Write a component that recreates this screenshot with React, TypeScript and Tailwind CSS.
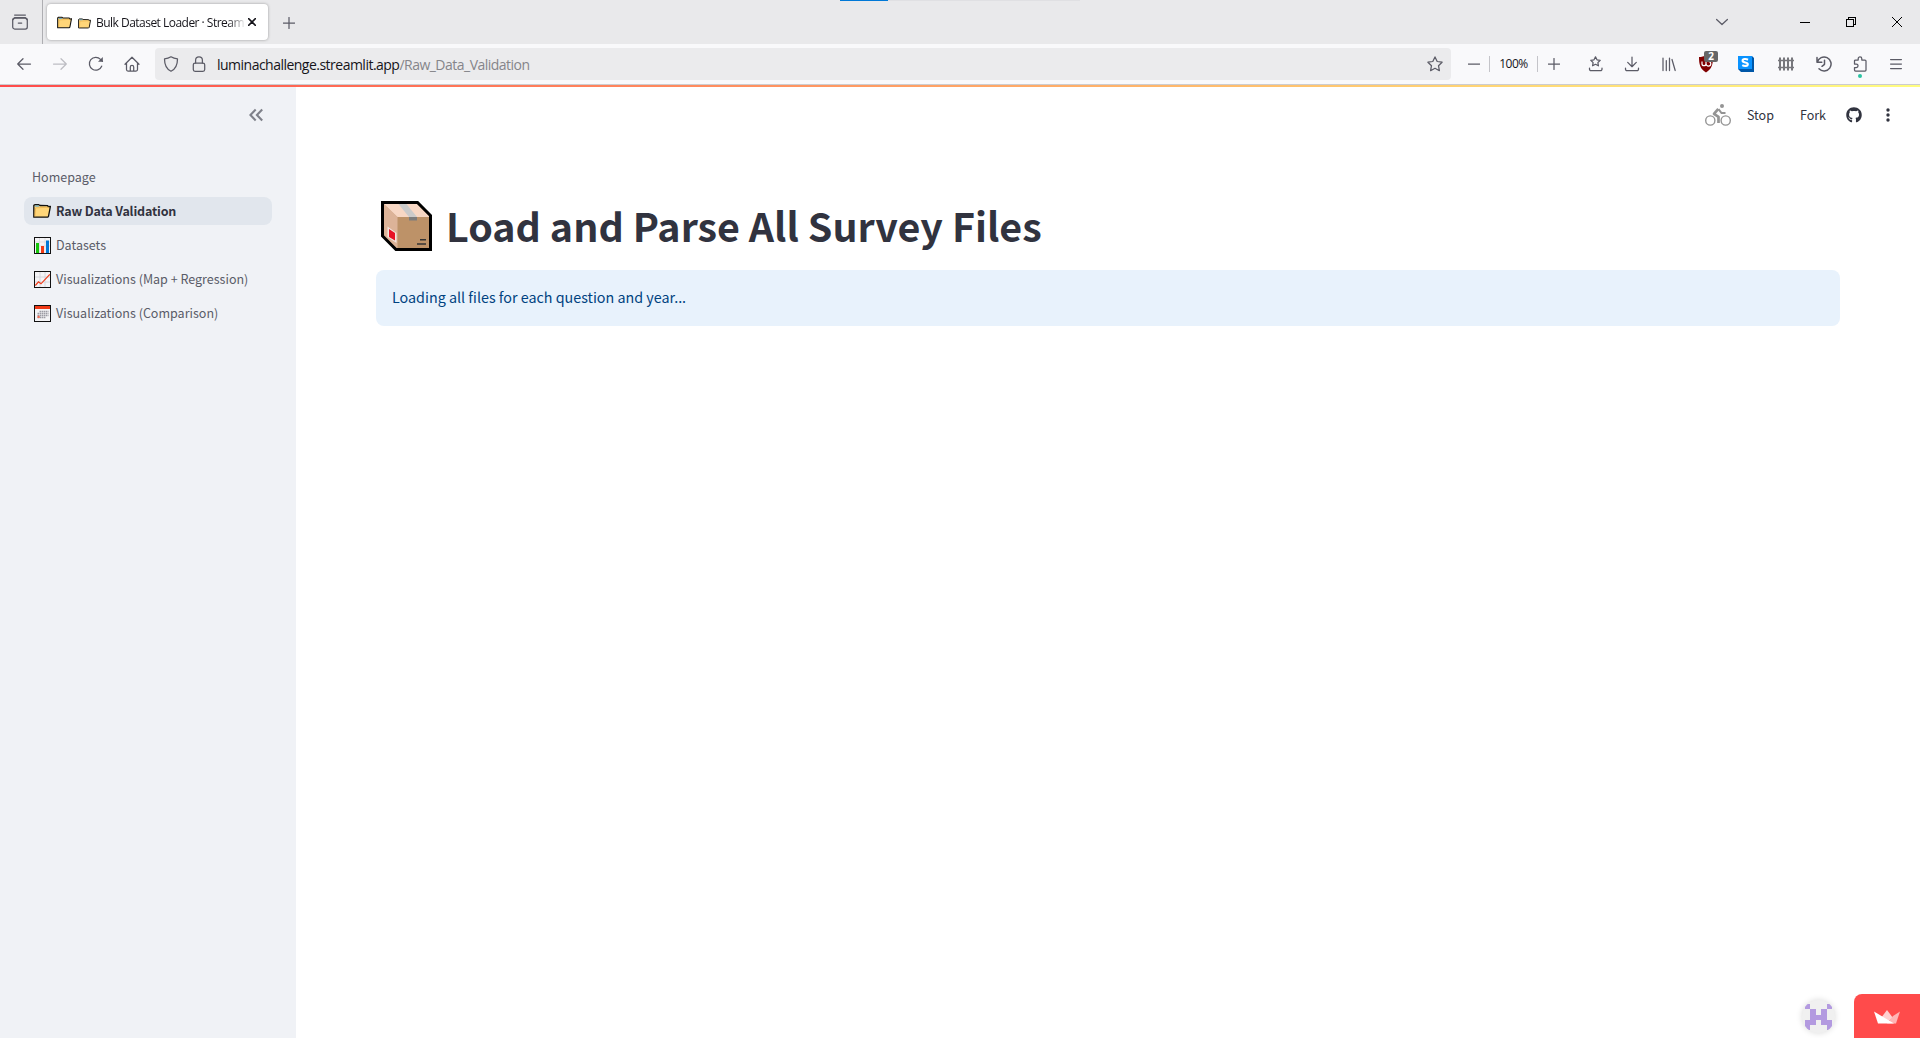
import React from "react";
import { FaGithub } from "react-icons/fa";

const SOURCE = "font-['Noto_Sans_CJK_SC',sans-serif]";
const SYSTEM = "font-['Open_Sans','Noto_Sans',sans-serif]";

type IconProps = {
  size?: number;
  box?: string;
  className?: string;
  children: React.ReactNode;
};

function Icon({ size = 16, box = "0 0 16 16", className = "", children }: IconProps) {
  return (
    <svg
      width={size}
      height={size}
      viewBox={box}
      fill="none"
      stroke="currentColor"
      strokeWidth="1.25"
      strokeLinecap="round"
      strokeLinejoin="round"
      className={`block shrink-0 ${className}`}
    >
      {children}
    </svg>
  );
}

function Cell({ width, children, className = "" }: { width: string; children: React.ReactNode; className?: string }) {
  return <div className={`flex h-full shrink-0 items-center justify-center ${width} ${className}`}>{children}</div>;
}

function Folder({ width, height }: { width: number; height: number }) {
  return (
    <svg width={width} height={height} viewBox="0 0 18 14" className="block shrink-0">
      <path d="M.8 13.200V1.400L1.800.7h4l1.200.8 7.800.2.300 1 2.300-.3-1.900 10-.8.800z" fill="#ffd679" stroke="#111" strokeWidth="1.3" strokeLinejoin="round" />
      <path d="M2 1.600h3.600l.8.900H2z" fill="#3a9be0" />
      <path d="M1.900 12.500 2.600 3.900l13-.7" fill="none" stroke="#e9ae45" strokeWidth=".7" />
    </svg>
  );
}

function BarChart() {
  return (
    <svg width="17" height="17" viewBox="0 0 17 17" className="block">
      <rect x=".5" y=".5" width="16" height="16" fill="#f4f4f6" stroke="#111" />
      <path d="M1 5h15M1 9h15M5.500 1v15M11 1v15" stroke="#d6d6dc" strokeWidth=".7" />
      <path d="M2 6h3v10H2z" fill="#16c60c" />
      <path d="M7 9h3v7H7z" fill="#f03a17" />
      <path d="M12 3.500h3V16h-3z" fill="#0078d7" />
    </svg>
  );
}

function LineChart() {
  return (
    <svg width="17" height="17" viewBox="0 0 17 17" className="block">
      <rect x=".5" y=".5" width="16" height="16" fill="#f4f4f6" stroke="#111" />
      <path d="M1 6h15M1 11h15M6 1v15M11 1v15" stroke="#d0d0d8" strokeWidth=".8" />
      <path d="M1.300 14.500 4.500 10.800 7 12.800 15.800 3.300" fill="none" stroke="#f03a17" strokeWidth="1.2" />
    </svg>
  );
}

function Calendar() {
  return (
    <svg width="17" height="17" viewBox="0 0 17 17" className="block">
      <rect x=".5" y=".5" width="16" height="16" fill="#f4f4f6" stroke="#111" />
      <path d="M1 1h15v3H1z" fill="#f03a17" />
      <path d="M5.500 6.500h9M3.500 8.500h11M3.500 10.500h11M3.500 12.500h8" stroke="#9c9ca4" strokeWidth="1.400" strokeDasharray="1.600 .5" />
      <path d="M3.500 10.800h2.200v2.200H3.500z" fill="#f0705a" />
    </svg>
  );
}

function Package() {
  return (
    <svg width="51" height="50" viewBox="0 0 51 50" className="block shrink-0">
      <path d="M1.500 1.500H36L49.500 15V48.500H15L1.500 34.500z" fill="#bd9268" />
      <path d="M2.500 2.500 16.500 16V48L2.500 34z" fill="#dcb398" />
      <path d="M2.500 2.500H36L49 16H16.500z" fill="#f7d7c4" />
      <path d="M17 2.500h8L36 16h-8z" fill="#cacaca" />
      <path d="M28 16h8v3.500h-8z" fill="#7c7c7c" />
      <path d="M6.500 25.500 15.500 32v10L6.500 36z" fill="#f3e6de" />
      <path d="M8 28 14 32v7.500L8 36z" fill="#e81224" />
      <path d="M39 38.700h6M36 43h9" stroke="#333" strokeWidth="1.500" />
      <path d="M1.500 1.500H36.500L49.500 14.500V48.500H15L1.500 35z" fill="none" stroke="#000" strokeWidth="3" />
    </svg>
  );
}

function TabStrip() {
  return (
    <div className="flex h-11 shrink-0 items-center bg-[#e9e9eb] text-[#5b5b66]">
      <div className="flex h-full w-[43px] items-center justify-center border-r border-[#aeaeb2] pr-[3px]">
        <Icon>
          <path d="M2.600 1h10.800" />
          <rect x=".7" y="4" width="14.600" height="11" rx="2" />
          <path d="M1 5.500 3 3.500h10l2 2M6.300 9h3.400" />
        </Icon>
      </div>
      <div className="ml-1 flex h-9 w-[221px] items-center rounded bg-white pl-[10px] shadow-[0_0_3px_rgba(0,0,0,0.35)]">
        <Folder width={15} height={13} />
        <div className="ml-1.5 flex w-[168px] shrink-0 items-center overflow-hidden pt-0.5">
          <Folder width={13} height={11} />
          <span className={`${SYSTEM} ml-[5px] bg-[linear-gradient(90deg,#15141a_132px,transparent_150px)] bg-clip-text text-[12px] leading-5 tracking-[-0.520px] whitespace-nowrap text-transparent`}>
            Bulk Dataset Loader · Stream
          </span>
        </div>
        <Icon size={8} box="0 0 8 8" className="ml-0.5 text-[#15141a]">
          <path d="m.6.6 6.800 6.800M7.400.6.6 7.400" strokeWidth="1.500" />
        </Icon>
      </div>
      <Icon size={12} box="0 0 12 12" className="mt-0.5 ml-[15px]">
        <path d="M6 .5v11M.5 6h11" />
      </Icon>
      <div className="h-full w-[545px]" />
      <div className="h-px w-12 self-start bg-[#0078d7]" />
      <div className="h-px w-48 self-start bg-[#e0e0e3]" />
      <div className="flex-1" />
      <Icon size={12} box="0 0 12 12" className="mr-[72px]">
        <path d="m.6 3.500 5.400 5 5.400-5" />
      </Icon>
      <div className="mr-9 h-px w-[10px] bg-black" />
      <svg width="10" height="10" viewBox="0 0 10 10" fill="none" stroke="#000" className="mr-9 block" shapeRendering="crispEdges">
        <path d="M.5 2.500h7v7h-7zM2.500 2.500v-2h7v7h-2" />
      </svg>
      <svg width="10" height="10" viewBox="0 0 10 10" stroke="#000" className="mr-[18px] block">
        <path d="m0 0 10 10M10 0 0 10" />
      </svg>
    </div>
  );
}

const STAR = "m8 .9 2.200 4.600 4.900.7-3.600 3.500.9 5L8 12.300l-4.400 2.400.9-5L.9 6.200l4.900-.7z";

function Toolbar() {
  return (
    <div className="flex h-10 shrink-0 items-center bg-[#f9f9fb] pl-1.5 text-[#5b5b66]">
      <Cell width="w-9"><Icon><path d="M14.500 8H1.700M7 2.700 1.700 8 7 13.300" /></Icon></Cell>
      <Cell width="w-9" className="text-[#bdbdc3]"><Icon><path d="M1.500 8h12.800M9 2.700 14.300 8 9 13.300" /></Icon></Cell>
      <Cell width="w-9">
        <Icon><path d="M13.700 10.200A6.400 6.400 0 1 1 12.500 3.400l2 2" /><path d="M14.800 1v4.800H10z" fill="currentColor" stroke="none" /></Icon>
      </Cell>
      <Cell width="w-[34px]" className="pl-px">
        <Icon><path d="M1 8.300 8 1.200l7 7.100M2.500 7v6.500a1.500 1.500 0 0 0 1.500 1.500h8a1.500 1.500 0 0 0 1.500-1.500V7M6.300 15v-4a1.700 1.700 0 0 1 3.400 0v4" /></Icon>
      </Cell>
      <div className="ml-[7px] flex h-8 w-[1296px] items-center rounded bg-[#ebebed] px-2">
        <Icon><path d="M8 .8c2 1.300 4 1.900 6.500 2.100 0 6-1.800 10-6.500 12.300C3.300 12.900 1.500 8.900 1.500 2.900 4 2.700 6 2.100 8 .8z" /></Icon>
        <Icon className="ml-3"><rect x="2.300" y="7" width="11.400" height="8.300" rx="1.800" /><path d="M4.600 7V4.200a3.400 3.400 0 0 1 6.800 0V7" /></Icon>
        <span className={`${SYSTEM} mt-0.5 ml-[10px] text-[14px] leading-8 tracking-[-0.515px] whitespace-nowrap text-[#15141a]`}>
          luminachallenge.streamlit.app<span className="text-[#85858a]">/Raw_Data_Validation</span>
        </span>
        <Icon className="ml-auto"><path d={STAR} /></Icon>
      </div>
      <Cell width="w-[39px]" className="ml-[3px]"><Icon size={12} box="0 0 12 12"><path d="M.5 6h11" /></Icon></Cell>
      <div className="-ml-1 flex h-4 w-[49px] items-center justify-center border-x border-[#c4c4c9]">
        <span className={`${SYSTEM} text-[12px] tracking-[-0.500px] text-[#15141a]`}>100%</span>
      </div>
      <Cell width="w-[29px]" className="pl-0.5"><Icon size={12} box="0 0 12 12"><path d="M6 .5v11M.5 6h11" /></Icon></Cell>
      <Cell width="w-9" className="ml-[11px]">
        <Icon><path d="m7.500.9 1.500 2.900 3.200.5-2.300 2.300.5 3.200-2.900-1.500-2.900 1.500.5-3.200-2.300-2.300L6 3.800zM1.500 12v1.200A1.500 1.500 0 0 0 3 14.700h9.500a1.500 1.500 0 0 0 1.500-1.500V12" /></Icon>
      </Cell>
      <Cell width="w-9">
        <Icon><path d="M8 1v9.500M3.700 6.400 8 10.700l4.300-4.300M1.500 12v1.200A1.500 1.500 0 0 0 3 14.700h10a1.500 1.500 0 0 0 1.500-1.500V12" /></Icon>
      </Cell>
      <Cell width="w-[37px]"><Icon><path d="M2 2v12.500M5.300 4.500v10M8.500 2v12.500M11 3.500l3.200 11" /></Icon></Cell>
      <Cell width="w-[38px]" className="relative">
        <svg width="16" height="18" viewBox="0 0 16 18" className="block">
          <path d="M8 0c2 1.500 4.500 2 7 2 0 7-1 12-7 15.500C2 14 1 9 1 2c2.500 0 5-.5 7-2z" fill="#800000" />
          <path d="M4 6.500v2.200a2 2 0 0 0 4 0V6.500m0 2.200a2.400 2.400 0 1 0 2.400-2.400" fill="none" stroke="#fff" strokeWidth="1.200" />
        </svg>
        <span className="absolute top-[7px] left-[17px] flex h-[11px] w-[14px] items-center justify-center rounded-[2px] bg-[#666] font-['Open_Sans',sans-serif] text-[10px] font-bold text-white">2</span>
      </Cell>
      <Cell width="w-[42px]">
        <svg width="16" height="16" viewBox="0 0 16 16" className="block">
          <path d="M0 0h14l2 2v14H3l-3-3z" fill="#0057a8" />
          <path d="M0 0h14v13H0z" fill="#0a93ff" />
          <path d="M10 3.700C8.500 2.900 4.600 2.500 4.600 4.700c0 2.400 5.200 1 5.200 3.500 0 2.200-3.800 2-5.500 1" fill="none" stroke="#fff" strokeWidth="2.100" />
        </svg>
      </Cell>
      <Cell width="w-[38px]">
        <svg width="16" height="16" viewBox="0 0 16 16" fill="none" stroke="#77777c" className="block">
          <path d="M2 1.500v13M6 1.500v13M10 1.500v13M14 1.500v13" strokeWidth="2" />
          <path d="M0 4.500h16M0 11.500h16" strokeWidth="1.300" />
        </svg>
      </Cell>
      <Cell width="w-[38px]">
        <Icon><path d="M1.300 6.200A7 7 0 1 1 3 12.800M1 1.500v4.800h4.800M8.500 4.300v4L6 10.300" strokeWidth="1.500" /></Icon>
      </Cell>
      <Cell width="w-9" className="relative">
        <Icon><path d="M1.500 8V5a1 1 0 0 1 1-1h2.700V2.700a1.800 1.800 0 0 1 3.600 0V4H12a1 1 0 0 1 1 1v9a1 1 0 0 1-1 1H2.500a1 1 0 0 1-1-1v-2.500h1.800a1.700 1.700 0 0 0 0-3.500z" /></Icon>
        <span className="absolute top-[30px] left-[15px] size-1 rounded-full bg-[#2ac3a2]" />
      </Cell>
      <Cell width="w-[34px]"><Icon size={12} box="0 0 12 12"><path d="M.6 1.500h10.800M.6 6h10.800M.6 10.500h10.800" /></Icon></Cell>
    </div>
  );
}

const pages = [
  { label: "Homepage" },
  { label: "Raw Data Validation", icon: <Folder width={18} height={14} />, active: true },
  { label: "Datasets", icon: <BarChart /> },
  { label: "Visualizations (Map + Regression)", icon: <LineChart /> },
  { label: "Visualizations (Comparison)", icon: <Calendar /> },
];

function Sidebar() {
  return (
    <aside className="flex w-[296px] shrink-0 flex-col bg-[#f0f2f6] px-6 pt-[21px]">
      <div className="mr-[9px] flex h-3.5 justify-end text-[#7f818a]">
        <svg width="14" height="14" viewBox="0 0 14 14" fill="none" stroke="currentColor" strokeWidth="2.100" className="block">
          <path d="M6.700 1.500 1.400 7l5.300 5.500M13.200 1.500 7.900 7l5.300 5.500" />
        </svg>
      </div>
      <nav className="mt-[41px] flex flex-col gap-1.5">
        {pages.map((page) => (
          <a
            key={page.label}
            className={`flex h-7 items-center gap-1 rounded-lg px-2 ${SOURCE} text-[12.530px] leading-7 whitespace-nowrap ${
              page.active ? "bg-[#e1e6ed] font-bold tracking-[-0.170px] text-[#31333f]" : "text-[#5a5c68]"
            }`}
          >
            {page.icon && <span className="flex w-5 justify-center">{page.icon}</span>}
            <span>{page.label}</span>
          </a>
        ))}
      </nav>
    </aside>
  );
}

function Cyclist() {
  return (
    <svg width="26" height="22" viewBox="0 0 26 22" fill="none" stroke="#949494" className="block shrink-0">
      <circle cx="5.300" cy="16.500" r="4.600" strokeWidth="1.400" />
      <circle cx="20.700" cy="16.500" r="4.600" strokeWidth="1.400" />
      <circle cx="17" cy="2" r="2" fill="#949494" stroke="none" />
      <path d="m13.300 4.800-4.300 5 4.500 3v6.200" strokeWidth="2.700" strokeLinejoin="round" />
      <path d="m13.500 5.200 3 3.800h4" strokeWidth="2" />
    </svg>
  );
}

function AppHeader() {
  return (
    <header className={`flex h-14 items-center justify-end ${SOURCE} text-[12.530px] leading-5 text-[#31333f]`}>
      <Cyclist />
      <span className="ml-4">Stop</span>
      <span className="ml-[26px]">Fork</span>
      <FaGithub className="ml-5 size-4" />
      <svg width="4" height="14" viewBox="0 0 4 14" fill="currentColor" className="mr-[30px] ml-6 block">
        <circle cx="2" cy="2" r="1.700" />
        <circle cx="2" cy="7" r="1.700" />
        <circle cx="2" cy="12" r="1.700" />
      </svg>
    </header>
  );
}

function Avatar() {
  return (
    <div className="mb-[5px] size-[33px] overflow-hidden rounded-full bg-[#f0f0f0] shadow-[0_0_6px_rgba(0,0,0,0.15)]">
      <svg width="33" height="33" viewBox="0 0 33 33" fill="#b39ae0" shapeRendering="crispEdges">
        <path d="M3 4h5.300v5.300H3zM24.700 4H30v5.300h-5.300zM8.300 9.300h5.400v5.400h5.600V9.300h5.400V20H30v10h-5.300v-5h-5.400v-5h-5.600v5H8.300v5H3V20h5.300z" />
      </svg>
    </div>
  );
}

export default function App() {
  return (
    <div className="flex h-[1038px] w-[1920px] flex-col overflow-hidden bg-white">
      <TabStrip />
      <Toolbar />
      <div className="h-px shrink-0 bg-[#cccccf]" />
      <div className="h-0.5 shrink-0 bg-[linear-gradient(90deg,#ff4b4b,#fffd80)]" />
      <div className="flex min-h-0 flex-1">
        <Sidebar />
        <main className="flex min-w-0 flex-1 flex-col">
          <AppHeader />
          <div className="flex flex-1 flex-col px-20 pt-[58px]">
            <h1 className={`flex h-[50px] items-center gap-[14px] pl-[5px] ${SOURCE} text-[39.400px] leading-[50px] font-bold whitespace-nowrap text-[#31333f]`}>
              <Package />
              <span className="-mt-0.5">Load and Parse All Survey Files</span>
            </h1>
            <div className={`mt-[19px] flex h-14 items-center rounded-lg bg-[#e8f2fc] px-4 pb-0.5 ${SOURCE} text-[14.320px] leading-6 text-[#004280]`}>
              Loading all files for each question and year...
            </div>
          </div>
          <div className="flex items-end justify-end gap-[19px]">
            <Avatar />
            <div className="flex h-11 w-[66px] items-center justify-center rounded-tl-lg bg-[#ff4b4b] pt-0.5">
              <svg width="26" height="14" viewBox="0 0 26 14" className="block">
                <path d="M13 0 19 8l-6 4-6-4z" fill="#ffd0d0" />
                <path d="M26 1.500 22 13.500H13L19 6z" fill="#ffb5b5" />
                <path d="m0 1.500 20 12H4z" fill="#fff" />
              </svg>
            </div>
          </div>
        </main>
      </div>
    </div>
  );
}
